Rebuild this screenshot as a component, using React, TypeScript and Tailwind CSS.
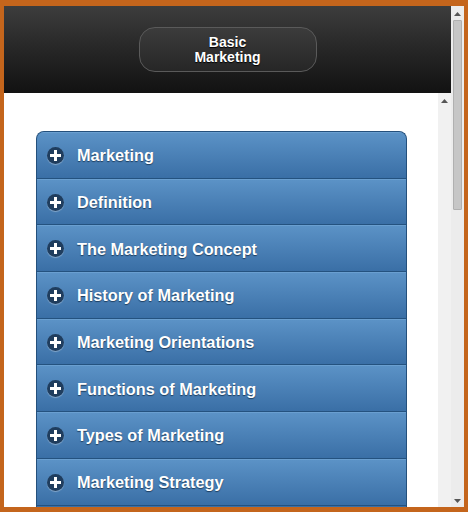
const topics = [
  "Marketing",
  "Definition",
  "The Marketing Concept",
  "History of Marketing",
  "Marketing Orientations",
  "Functions of Marketing",
  "Types of Marketing",
  "Marketing Strategy",
];

const PlusIcon = () => (
  <span className="flex h-[17px] w-[17px] shrink-0 items-center justify-center rounded-full bg-[#1f3d5e] shadow-[0_1px_1px_rgba(255,255,255,0.35)]">
    <svg width="11" height="11" viewBox="0 0 11 11">
      <path d="M4 0h3v4h4v3H7v4H4V7H0V4h4z" fill="#fff" />
    </svg>
  </span>
);

const Arrow = ({ up }: { up?: boolean }) => (
  <svg width="7" height="4" viewBox="0 0 7 4" className="mx-auto">
    <path d={up ? "M0 4L3.5 0L7 4z" : "M0 0L3.5 4L7 0z"} fill="#555" />
  </svg>
);

export default function App() {
  return (
    <div className="flex h-[512px] w-[468px] border-x-4 border-t-[6px] border-b-[5px] border-[#c4651c] bg-white font-['Liberation_Sans',Arial,sans-serif]">
      <div className="flex min-w-0 flex-1 flex-col overflow-hidden">
        {/* top bar */}
        <div className="flex h-[87px] shrink-0 items-center justify-center bg-gradient-to-b from-[#3d3d3d] to-[#121212]">
          <div className="flex h-[45px] w-[178px] flex-col items-center justify-center rounded-[16px] border border-[#5a5a5a] bg-gradient-to-b from-[#3c3c3c] to-[#262626] text-[14px] font-bold leading-[15px] text-white [text-shadow:0_1px_1px_#000]">
            <span>Basic</span>
            <span>Marketing</span>
          </div>
        </div>

        {/* content */}
        <div className="flex min-h-0 flex-1">
          <div className="min-w-0 flex-1 overflow-hidden pl-[32px] pr-[31px] pt-[38px]">
            <div className="h-[400px] overflow-hidden rounded-t-[8px] border-x border-t border-[#24507c] bg-[#3a6fa6]">
              {topics.map((t) => (
                <div
                  key={t}
                  className="flex h-[46.7px] items-center gap-[13px] border-b border-t border-b-[#24527f] border-t-[#6a9fd0] bg-gradient-to-b from-[#5b92c6] to-[#3a6fa6] pl-[10px] text-[16.3px] font-bold text-white [text-shadow:0_1px_1px_#1d3d5e]"
                >
                  <PlusIcon />
                  <span>{t}</span>
                </div>
              ))}
            </div>
          </div>
          <div className="flex w-[13px] shrink-0 flex-col justify-between bg-[#f1f1f1] pb-[2px] pt-[6px]">
            <Arrow up />
            <span />
          </div>
        </div>
      </div>

      {/* window scrollbar */}
      <div className="flex w-[13px] shrink-0 flex-col bg-[#ececec] px-[2px] pb-[4px] pt-[6px]">
        <Arrow up />
        <div className="mt-[4px] h-[190px] rounded-[1px] border border-[#b0b0b0] bg-[#c6c6c6]" />
        <div className="flex-1" />
        <Arrow />
      </div>
    </div>
  );
}
